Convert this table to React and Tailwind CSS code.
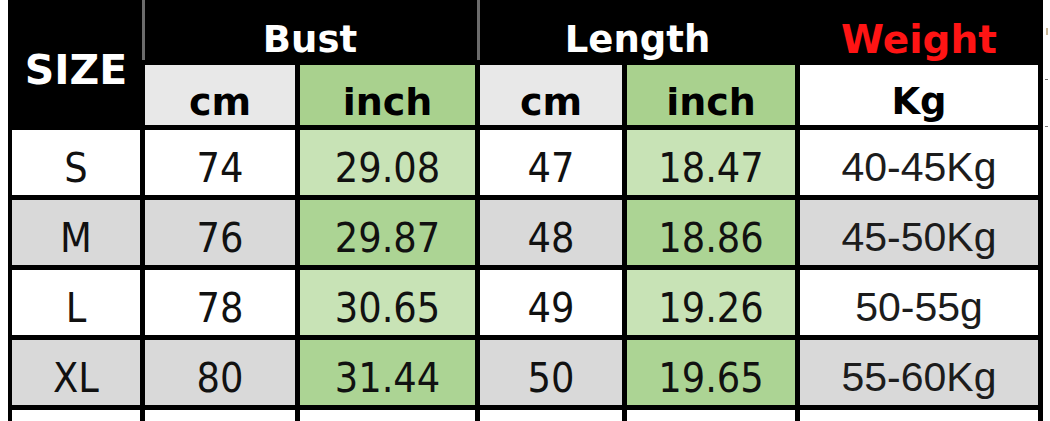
import React from 'react';

const rows = [
  { size: 'S', bustCm: '74', bustIn: '29.08', lenCm: '47', lenIn: '18.47', weight: '40-45Kg', shade: false },
  { size: 'M', bustCm: '76', bustIn: '29.87', lenCm: '48', lenIn: '18.86', weight: '45-50Kg', shade: true },
  { size: 'L', bustCm: '78', bustIn: '30.65', lenCm: '49', lenIn: '19.26', weight: '50-55g', shade: false },
  { size: 'XL', bustCm: '80', bustIn: '31.44', lenCm: '50', lenIn: '19.65', weight: '55-60Kg', shade: true },
];

const cols = 'grid grid-cols-[128px_150px_175px_142px_168px_238px] gap-[5px]';
const head = "font-['DejaVu_Sans',sans-serif] font-bold";
const data = "font-['DejaVu_Sans_Condensed','Noto_Sans',sans-serif] text-[41px] text-[#111] pt-[13px]";

const Cell = ({ className, children }) => (
  <div className={`flex items-center justify-center ${className}`}>{children}</div>
);

const App = () => {
  return (
    <div className="w-[1050px] h-[421px] bg-white overflow-hidden flex">
      <div className="w-[1043px] shrink-0 flex flex-col">
        {/* tail of the row above */}
        <div className={`${cols} h-[5px] bg-[#5a5a5a] ml-[8px] pl-[4px] pr-[5px]`}>
          {[0, 1, 2, 3, 4, 5].map((i) => (
            <div key={i} className="bg-white" />
          ))}
        </div>

        <div
          className={`${cols} grid-rows-[60px_60px_65px_65px_65px_65px_65px] bg-black ml-[8px] pl-[4px] pr-[5px]`}
        >
          <Cell className={`row-span-2 bg-black text-white text-[41px] pt-[16px] ${head}`}>SIZE</Cell>
          <Cell className={`col-span-2 bg-black text-white text-[37px] pt-[20px] shadow-[-3px_0_0_0_#6c6c6c] ${head}`}>
            Bust
          </Cell>
          <Cell className={`col-span-2 bg-black text-white text-[37px] pt-[20px] shadow-[-3px_0_0_0_#6c6c6c] ${head}`}>
            Length
          </Cell>
          <Cell className={`bg-black text-[#ff1414] text-[39px] pt-[20px] ${head}`}>Weight</Cell>

          <Cell className={`bg-[#e8e8e8] text-black text-[38px] pt-[14px] ${head}`}>cm</Cell>
          <Cell className={`bg-[#a9d18e] text-black text-[38px] pt-[14px] ${head}`}>inch</Cell>
          <Cell className={`bg-[#e8e8e8] text-black text-[38px] pt-[14px] ${head}`}>cm</Cell>
          <Cell className={`bg-[#a9d18e] text-black text-[38px] pt-[14px] ${head}`}>inch</Cell>
          <Cell className={`bg-white text-black text-[37px] pt-[14px] ${head}`}>Kg</Cell>

          {rows.map((r) => {
            const base = r.shade ? 'bg-[#d9d9d9]' : 'bg-white';
            const green = r.shade ? 'bg-[#acd494]' : 'bg-[#c8e3b6]';
            return (
              <React.Fragment key={r.size}>
                <Cell className={`${base} ${data}`}>{r.size}</Cell>
                <Cell className={`${base} ${data}`}>{r.bustCm}</Cell>
                <Cell className={`${green} ${data}`}>{r.bustIn}</Cell>
                <Cell className={`${base} ${data}`}>{r.lenCm}</Cell>
                <Cell className={`${green} ${data}`}>{r.lenIn}</Cell>
                <Cell className={`${base} font-['Liberation_Sans',Arial,sans-serif] text-[41px] text-[#1c1c1c] pt-[11px]`}>
                  {r.weight}
                </Cell>
              </React.Fragment>
            );
          })}

          {/* start of the row below */}
          {[0, 1, 2, 3, 4, 5].map((i) => (
            <div key={i} className="bg-white" />
          ))}
        </div>
      </div>

      {/* clipped edge of the neighbouring content */}
      <div className="w-[7px] flex flex-col items-center">
        <div className="mt-[28px] w-[2px] h-[7px] bg-[#c9b89a]" />
        <div className="mt-[44px] w-[3px] h-[1px] bg-[#777]" />
        <div className="mt-[46px] w-[3px] h-[1px] bg-[#777]" />
      </div>
    </div>
  );
};

export default App;
